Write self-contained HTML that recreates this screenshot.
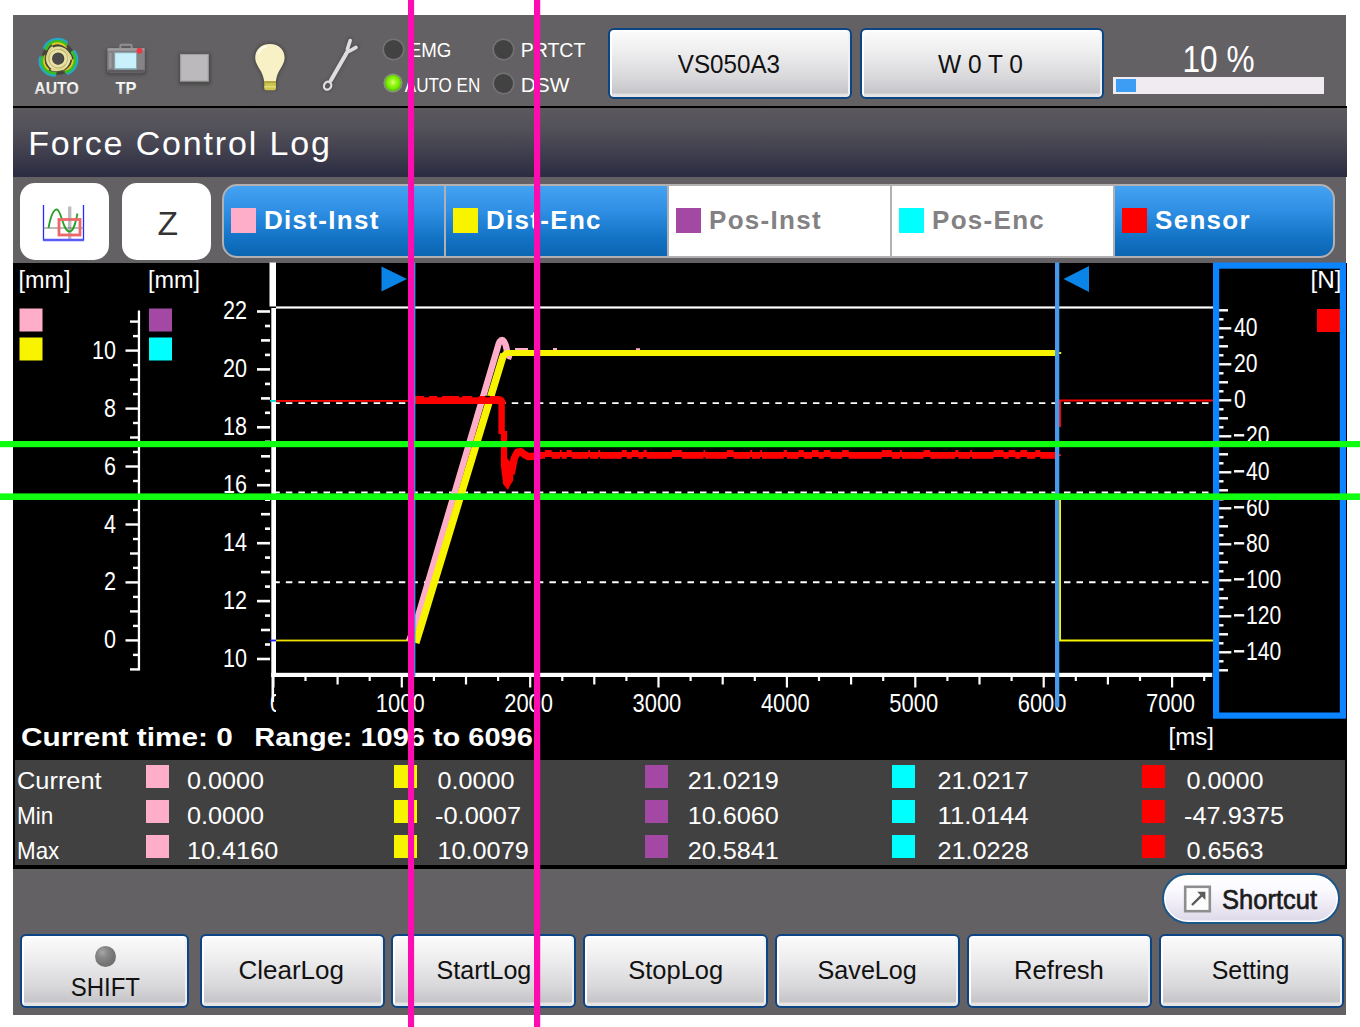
<!DOCTYPE html>
<html lang="en">
<head>
<meta charset="utf-8">
<title>Force Control Log</title>
<style>
html,body{margin:0;padding:0;background:#fff;}
body{width:1360px;height:1027px;position:relative;overflow:hidden;font-family:"Liberation Sans",sans-serif;}
.abs{position:absolute;}
#panel{position:absolute;left:13px;top:15px;width:1333px;height:999.5px;background:#636163;}
#hdrline{position:absolute;left:13px;top:105.5px;width:1333.5px;height:2.5px;background:#000;}
#title{position:absolute;left:13px;top:108px;width:1333.5px;height:68.5px;
 background:linear-gradient(#5b595d 0%,#55535a 25%,#3d3c4c 70%,#2b2b41 100%);}
#title span{position:absolute;left:15.2px;top:14.6px;font-size:34px;letter-spacing:1.85px;color:#fff;white-space:nowrap;line-height:40px;}
#chartbg{position:absolute;left:13px;top:262.5px;width:1333.5px;height:606px;background:#000;}
#table{position:absolute;left:15px;top:760px;width:1330px;height:105px;background:#424142;}
.btn{position:absolute;box-sizing:border-box;border:2px solid #0c4484;border-radius:6px;
 background:linear-gradient(#fbfbfb 0%,#efeff0 30%,#d9d8db 70%,#c6c5c9 94%,#e4e4e4 96%,#e4e4e4 100%);
 box-shadow:inset 2px 2px 0 #fff, inset -2px 0 0 #f0f0f0;
 color:#111;text-align:center;white-space:nowrap;}
.btn span{display:inline-block;}
.wbtn{position:absolute;background:#fff;border-radius:15px;}
.tab{position:absolute;top:184px;height:74px;box-sizing:border-box;border:2px solid #b2b0b2;border-left-width:1px;border-right-width:1px;}
.tab.on{background:linear-gradient(#45a2f2 0%,#2f8fe4 35%,#1272c4 75%,#0c66b2 100%);}
.tab.off{background:#fff;}
.tab i{position:absolute;top:22px;margin-left:-1px;width:25px;height:25px;}
.tab b{position:absolute;top:17px;font-size:26px;line-height:34px;letter-spacing:1.3px;white-space:nowrap;}
.tab.on b{color:#fff;}
.tab.off b{color:#838183;}
.sq{position:absolute;width:23px;height:23px;}
.tv{position:absolute;font-size:24px;line-height:28px;color:#fff;white-space:nowrap;letter-spacing:0.75px;}
svg{position:absolute;left:0;top:0;}
svg text{font-family:"Liberation Sans",sans-serif;}
.led{position:absolute;width:19px;height:19px;border-radius:50%;background:#434243;box-shadow:0 0 0 1.6px #747274;}
.hl{position:absolute;font-size:19px;line-height:22px;color:#fff;white-space:nowrap;}
</style>
</head>
<body>
<div id="panel"></div>

<div id="header">
<div class="led" style="left:383.8px;top:39.7px;"></div>
<div class="led" style="left:385.2px;top:75.3px;width:16px;height:16px;background:radial-gradient(circle at 50% 46%,#e4ff88 0%,#a4fa28 22%,#74ea00 52%,#52c000 80%,#4a9c10 100%);box-shadow:0 0 0 1.6px rgba(150,170,130,.75);"></div>
<div class="led" style="left:494.3px;top:39.7px;"></div>
<div class="led" style="left:494.3px;top:74.1px;"></div>
</div>
<div id="hdrline"></div>
<div id="title"><span>Force Control Log</span></div>
<div class="btn" style="left:607.5px;top:27.5px;width:244.5px;height:71.5px;"></div>
<div class="btn" style="left:860px;top:27.5px;width:244px;height:71.5px;"></div>
<div class="abs" style="left:1113px;top:77px;width:211px;height:17px;background:#f0ebf0;"></div>
<div class="abs" style="left:1115.5px;top:79px;width:20.5px;height:12.5px;background:#3d9cf3;"></div>
<div class="wbtn" style="left:19.5px;top:183px;width:89.5px;height:77px;"></div>
<div class="wbtn" style="left:122px;top:183px;width:88.5px;height:77px;"></div>
<div class="tab on" style="left:222px;width:223px;border-radius:15px 0 0 15px;border-left-width:2px;"><i style="left:8px;background:#ffaec9"></i><b style="left:40px">Dist-Inst</b></div>
<div class="tab on" style="left:445px;width:223px;"><i style="left:8px;background:#f8f400"></i><b style="left:40px">Dist-Enc</b></div>
<div class="tab off" style="left:668px;width:223px;"><i style="left:8px;background:#a349a4"></i><b style="left:40px">Pos-Inst</b></div>
<div class="tab off" style="left:891px;width:223px;"><i style="left:8px;background:#00ffff"></i><b style="left:40px">Pos-Enc</b></div>
<div class="tab on" style="left:1114px;width:221px;border-radius:0 15px 15px 0;border-right-width:2px;"><i style="left:8px;background:#ff0000"></i><b style="left:40px">Sensor</b></div>
<div id="chartbg"></div>
<div id="table"></div>
<div class="sq" style="left:146.3px;top:765px;background:#ffaec9"></div>
<div class="sq" style="left:394px;top:765px;background:#f8f400"></div>
<div class="sq" style="left:644.5px;top:765px;background:#a349a4"></div>
<div class="sq" style="left:892.4px;top:765px;background:#00ffff"></div>
<div class="sq" style="left:1142px;top:765px;background:#ff0000"></div>
<div class="sq" style="left:146.3px;top:800px;background:#ffaec9"></div>
<div class="sq" style="left:394px;top:800px;background:#f8f400"></div>
<div class="sq" style="left:644.5px;top:800px;background:#a349a4"></div>
<div class="sq" style="left:892.4px;top:800px;background:#00ffff"></div>
<div class="sq" style="left:1142px;top:800px;background:#ff0000"></div>
<div class="sq" style="left:146.3px;top:835px;background:#ffaec9"></div>
<div class="sq" style="left:394px;top:835px;background:#f8f400"></div>
<div class="sq" style="left:644.5px;top:835px;background:#a349a4"></div>
<div class="sq" style="left:892.4px;top:835px;background:#00ffff"></div>
<div class="sq" style="left:1142px;top:835px;background:#ff0000"></div>
<div class="btn" style="left:20px;top:934px;width:169px;height:74px;"><i class="abs" style="left:72.5px;top:10px;width:21px;height:21px;border-radius:50%;background:radial-gradient(circle at 35% 30%,#a8a8a8 0%,#8a8a8a 25%,#747474 60%,#6a6a6a 100%);"></i></div>
<div class="btn" style="left:199.5px;top:934px;width:185px;height:74px;"></div>
<div class="btn" style="left:391.3px;top:934px;width:185px;height:74px;"></div>
<div class="btn" style="left:583.1px;top:934px;width:185px;height:74px;"></div>
<div class="btn" style="left:774.9px;top:934px;width:185px;height:74px;"></div>
<div class="btn" style="left:966.7px;top:934px;width:185px;height:74px;"></div>
<div class="btn" style="left:1158.5px;top:934px;width:185px;height:74px;"></div>
<div class="btn" style="left:1162px;top:873px;width:178px;height:51px;border-radius:25.5px;border-color:#1a5688;background:linear-gradient(#ffffff 0%,#fbfaff 30%,#efecf6 60%,#dcd8e8 100%);box-shadow:inset 0 0 0 1.5px #fff;"></div>
<svg width="1360" height="1027" viewBox="0 0 1360 1027">
<defs><filter id="sh" x="-30%" y="-30%" width="160%" height="160%"><feGaussianBlur stdDeviation="1.6"/></filter><filter id="b1" x="-20%" y="-20%" width="140%" height="140%"><feGaussianBlur stdDeviation="0.55"/></filter><linearGradient id="gtxt" x1="0" y1="0" x2="0" y2="1"><stop offset="0" stop-color="#ffffff"/><stop offset="0.55" stop-color="#f0f0f0"/><stop offset="1" stop-color="#b8b8b8"/></linearGradient></defs>
<g id="ico-auto" fill="none" filter="url(#b1)"><circle cx="58.2" cy="58.2" r="16.5" fill="#3f3e36" opacity="0.8"/><path d="M44.22 47.71 A14.6 14.6 0 0 1 66.55 42.14" stroke="#22a8cc" stroke-width="2.6" stroke-linecap="round"/><path d="M46.06 49.00 A12.4 12.4 0 0 1 66.17 44.72" stroke="#38be24" stroke-width="2.8" stroke-linecap="round"/><path d="M52.68 44.46 A10.4 10.4 0 0 1 65.97 47.53" stroke="#e2ce20" stroke-width="2.0" stroke-linecap="round"/><path d="M74.28 51.34 A14.6 14.6 0 0 1 67.93 73.46" stroke="#22a8cc" stroke-width="2.6" stroke-linecap="round"/><path d="M72.24 52.29 A12.4 12.4 0 0 1 65.88 71.84" stroke="#38be24" stroke-width="2.8" stroke-linecap="round"/><path d="M72.86 60.29 A10.4 10.4 0 0 1 63.55 70.27" stroke="#e2ce20" stroke-width="2.0" stroke-linecap="round"/><path d="M54.90 75.36 A14.6 14.6 0 0 1 40.11 57.74" stroke="#22a8cc" stroke-width="2.6" stroke-linecap="round"/><path d="M55.25 73.14 A12.4 12.4 0 0 1 42.59 56.94" stroke="#38be24" stroke-width="2.8" stroke-linecap="round"/><path d="M48.27 69.19 A10.4 10.4 0 0 1 45.20 55.89" stroke="#e2ce20" stroke-width="2.0" stroke-linecap="round"/><circle cx="58.2" cy="58.6" r="13" stroke="#4a4838" stroke-width="1.4" opacity="0.85"/><circle cx="58.2" cy="58.6" r="9.2" stroke="#e9e2a2" stroke-width="6"/><path d="M60.7 49.4 A12 12 0 0 1 70.8 58.6" stroke="#ddd58c" stroke-width="2.6" stroke-linecap="round"/><path d="M64.9 65.3 A12 12 0 0 1 51.9 69.5" stroke="#ddd58c" stroke-width="2.6" stroke-linecap="round"/><path d="M49.0 61.1 A12 12 0 0 1 51.9 47.7" stroke="#ddd58c" stroke-width="2.6" stroke-linecap="round"/><circle cx="58.2" cy="58.6" r="9.4" stroke="#8c8450" stroke-width="0.9" opacity="0.55"/><ellipse cx="57.900000000000006" cy="58.800000000000004" rx="4.9" ry="5.6" fill="#4d4c4a"/></g>
<text x="34.2" y="93.9" font-size="16.5" fill="url(#gtxt)" font-weight="bold" text-anchor="start" textLength="44.6" lengthAdjust="spacingAndGlyphs">AUTO</text>
<g id="ico-tp"><rect x="105.5" y="48.5" width="41" height="27" rx="4" fill="#3c3a3c" opacity="0.55" filter="url(#sh)"/><rect x="120.3" y="44.8" width="11.4" height="7" rx="1" fill="none" stroke="#929092" stroke-width="1.9"/><rect x="107.3" y="48.3" width="37.5" height="24.2" rx="3" fill="#858385"/><rect x="107.3" y="48.3" width="37.5" height="2.2" rx="1" fill="#a09ea0"/><rect x="109.3" y="53" width="2.2" height="15" fill="#9c9a9c"/><rect x="107.3" y="69.8" width="37.5" height="2.7" rx="1.3" fill="#5e5c5e"/><rect x="114.4" y="52.3" width="22.4" height="17.2" fill="#8fb6c2"/><rect x="115.2" y="53.2" width="20.8" height="14.8" fill="#c8f1fb"/><circle cx="139.5" cy="50.8" r="3" fill="#ee3846" filter="url(#b1)"/></g>
<text x="115.4" y="93.9" font-size="16.5" fill="url(#gtxt)" font-weight="bold" text-anchor="start" textLength="21.0" lengthAdjust="spacingAndGlyphs">TP</text>
<rect x="178.5" y="53" width="32.5" height="32" fill="#3e3c3e" opacity="0.6" filter="url(#sh)"/>
<rect x="180" y="53.9" width="28.9" height="27.8" fill="#9f9d9f"/>
<rect x="181.2" y="55" width="26.5" height="25.5" fill="#bbb9bb"/>
<g id="ico-bulb"><path d="M269.9 42.5 C259.5 42.5 253.6 49.5 253.6 57.5 C253.6 66 260.5 70 262.5 79 L262.8 90.5 L277.2 90.5 L277.5 79 C279.5 70 286.2 66 286.2 57.5 C286.2 49.5 280.3 42.5 269.9 42.5 Z" fill="#3c3a38" opacity="0.55" filter="url(#sh)"/><path d="M269.9 44 C260.8 44 255.2 50.2 255.2 57.6 C255.2 65.2 261.6 69.6 263.6 78.2 L264.2 81.5 L275.8 81.5 L276.4 78.2 C278.4 69.6 284.6 65.2 284.6 57.6 C284.6 50.2 279 44 269.9 44 Z" fill="#f9f1c6"/><rect x="264.3" y="81" width="11.6" height="9.2" rx="1.6" fill="#cfc652"/><rect x="264.3" y="81" width="11.6" height="2.2" fill="#b0a83e"/><rect x="264.3" y="86" width="11.6" height="1.6" fill="#e2da72"/><path d="M258.4 53.5 C259.8 49.8 262.6 47.4 266 46.6" fill="none" stroke="#fffef4" stroke-width="1.8" stroke-linecap="round"/></g>
<g id="ico-wrench" fill="none" stroke-linecap="round" stroke-linejoin="round"><g stroke="#3c3a3c" opacity="0.5" filter="url(#sh)"><path d="M331 80.5 L348.8 49.5" stroke-width="5.5"/><circle cx="327.6" cy="85.6" r="3.8" stroke-width="3.5"/><path d="M350 39.5 L347.8 49 M349.5 50.8 L356.8 46.6" stroke-width="5"/></g><g stroke="#dedede"><path d="M330.8 80.6 L348.2 50.2" stroke-width="4"/><ellipse cx="327.6" cy="85.7" rx="3.5" ry="4.1" stroke-width="2.3" transform="rotate(30 327.6 85.7)"/><path d="M350.2 40.5 L347.4 49" stroke-width="3.6"/><path d="M349.6 51 L356 47.4" stroke-width="3.6"/></g></g>
<text x="408.8" y="56.8" font-size="20.5" fill="#fff" font-weight="normal" text-anchor="start" textLength="42.6" lengthAdjust="spacingAndGlyphs">EMG</text>
<text x="404.8" y="91.8" font-size="20.5" fill="#fff" font-weight="normal" text-anchor="start" textLength="75.5" lengthAdjust="spacingAndGlyphs">AUTO EN</text>
<text x="520.7" y="56.8" font-size="20.5" fill="#fff" font-weight="normal" text-anchor="start" textLength="64.7" lengthAdjust="spacingAndGlyphs">PRTCT</text>
<text x="520.7" y="91.8" font-size="20.5" fill="#fff" font-weight="normal" text-anchor="start" textLength="48.7" lengthAdjust="spacingAndGlyphs">DSW</text>
<text x="1182.5" y="71.5" font-size="36" fill="#fff" font-weight="normal" text-anchor="start" textLength="72.0" lengthAdjust="spacingAndGlyphs">10 %</text>
<g id="ico-graph" fill="none"><rect x="68" y="206.5" width="3.4" height="34" fill="#bdbdbd"/><path d="M43.5 205 V240 H83.5 V205" stroke="#2a2af8" stroke-width="1.3"/><path d="M43.5 240 H83.5" stroke="#5a5af8" stroke-width="2.6"/><path d="M43.5 228 H83.5" stroke="#787878" stroke-width="1"/><path d="M48.5 228 C51 214 54 209.5 57 209.5 C61 209.5 63 231.5 69.5 231.5 C74 231.5 75.5 222 77.5 213.5" stroke="#28a028" stroke-width="1.8"/><rect x="59" y="219.5" width="21" height="15.5" stroke="#ec6868" stroke-width="2.8"/></g>
<text x="157.5" y="235.0" font-size="33.5" fill="#333" font-weight="normal" text-anchor="start" textLength="20.5" lengthAdjust="spacingAndGlyphs">Z</text>
<rect x="1185.2" y="886.8" width="24.6" height="24.4" fill="#fcfcfc" stroke="#8e8e8e" stroke-width="2.6"/>
<path d="M1192 905 L1201.5 895.6" fill="none" stroke="#5a5a5a" stroke-width="2.4"/>
<path d="M1197.2 891.8 H1205.4 V900 Z" fill="#5a5a5a"/>
<text x="1222.0" y="909.1" font-size="27.5" fill="#1c1c1c" font-weight="normal" text-anchor="start" textLength="95.0" lengthAdjust="spacingAndGlyphs" stroke="#1c1c1c" stroke-width="0.7">Shortcut</text>
<g id="chart">
<text x="18.5" y="288.0" font-size="23" fill="#fff" font-weight="normal" text-anchor="start" textLength="52.0" lengthAdjust="spacingAndGlyphs">[mm]</text>
<text x="148.0" y="288.0" font-size="23" fill="#fff" font-weight="normal" text-anchor="start" textLength="52.0" lengthAdjust="spacingAndGlyphs">[mm]</text>
<text x="1310.5" y="287.5" font-size="23" fill="#fff" font-weight="normal" text-anchor="start" textLength="31.0" lengthAdjust="spacingAndGlyphs">[N]</text>
<text x="1168.5" y="744.5" font-size="23" fill="#fff" font-weight="normal" text-anchor="start" textLength="45.5" lengthAdjust="spacingAndGlyphs">[ms]</text>
<rect x="19.5" y="308.5" width="23" height="23" fill="#ffaec9"/>
<rect x="19.5" y="337.5" width="23" height="23" fill="#f8f400"/>
<rect x="149" y="308.5" width="23" height="23" fill="#a349a4"/>
<rect x="149" y="337.5" width="23" height="23" fill="#00ffff"/>
<rect x="1317" y="309" width="23" height="23" fill="#ff0000"/>
<rect x="137.8" y="310.5" width="2.3" height="360.1" fill="#fff"/>
<rect x="130.0" y="668.2" width="8.0" height="2.4" fill="#fff"/>
<rect x="133.0" y="653.7" width="5.0" height="2.4" fill="#fff"/>
<rect x="125.5" y="639.2" width="12.5" height="2.4" fill="#fff"/>
<rect x="133.0" y="624.7" width="5.0" height="2.4" fill="#fff"/>
<rect x="130.0" y="610.2" width="8.0" height="2.4" fill="#fff"/>
<rect x="133.0" y="595.7" width="5.0" height="2.4" fill="#fff"/>
<rect x="125.5" y="581.2" width="12.5" height="2.4" fill="#fff"/>
<rect x="133.0" y="566.7" width="5.0" height="2.4" fill="#fff"/>
<rect x="130.0" y="552.3" width="8.0" height="2.4" fill="#fff"/>
<rect x="133.0" y="537.8" width="5.0" height="2.4" fill="#fff"/>
<rect x="125.5" y="523.3" width="12.5" height="2.4" fill="#fff"/>
<rect x="133.0" y="508.8" width="5.0" height="2.4" fill="#fff"/>
<rect x="130.0" y="494.3" width="8.0" height="2.4" fill="#fff"/>
<rect x="133.0" y="479.8" width="5.0" height="2.4" fill="#fff"/>
<rect x="125.5" y="465.3" width="12.5" height="2.4" fill="#fff"/>
<rect x="133.0" y="450.8" width="5.0" height="2.4" fill="#fff"/>
<rect x="130.0" y="436.3" width="8.0" height="2.4" fill="#fff"/>
<rect x="133.0" y="421.8" width="5.0" height="2.4" fill="#fff"/>
<rect x="125.5" y="407.4" width="12.5" height="2.4" fill="#fff"/>
<rect x="133.0" y="392.9" width="5.0" height="2.4" fill="#fff"/>
<rect x="130.0" y="378.4" width="8.0" height="2.4" fill="#fff"/>
<rect x="133.0" y="363.9" width="5.0" height="2.4" fill="#fff"/>
<rect x="125.5" y="349.4" width="12.5" height="2.4" fill="#fff"/>
<rect x="133.0" y="334.9" width="5.0" height="2.4" fill="#fff"/>
<rect x="130.0" y="320.4" width="8.0" height="2.4" fill="#fff"/>
<text x="104.0" y="648.4" font-size="25.5" fill="#fff" font-weight="normal" text-anchor="start" textLength="12.0" lengthAdjust="spacingAndGlyphs">0</text>
<text x="104.0" y="590.4" font-size="25.5" fill="#fff" font-weight="normal" text-anchor="start" textLength="12.0" lengthAdjust="spacingAndGlyphs">2</text>
<text x="104.0" y="532.5" font-size="25.5" fill="#fff" font-weight="normal" text-anchor="start" textLength="12.0" lengthAdjust="spacingAndGlyphs">4</text>
<text x="104.0" y="474.5" font-size="25.5" fill="#fff" font-weight="normal" text-anchor="start" textLength="12.0" lengthAdjust="spacingAndGlyphs">6</text>
<text x="104.0" y="416.6" font-size="25.5" fill="#fff" font-weight="normal" text-anchor="start" textLength="12.0" lengthAdjust="spacingAndGlyphs">8</text>
<text x="92.0" y="358.6" font-size="25.5" fill="#fff" font-weight="normal" text-anchor="start" textLength="24.0" lengthAdjust="spacingAndGlyphs">10</text>
<rect x="269.5" y="262.5" width="6.5" height="44" fill="#fff"/>
<rect x="271.3" y="308" width="4.7" height="369" fill="#fff"/>
<rect x="257.0" y="657.7" width="13.0" height="2.6" fill="#fff"/>
<rect x="265.0" y="643.2" width="5.0" height="2.6" fill="#fff"/>
<rect x="261.0" y="628.7" width="9.0" height="2.6" fill="#fff"/>
<rect x="265.0" y="614.3" width="5.0" height="2.6" fill="#fff"/>
<rect x="257.0" y="599.8" width="13.0" height="2.6" fill="#fff"/>
<rect x="265.0" y="585.3" width="5.0" height="2.6" fill="#fff"/>
<rect x="261.0" y="570.8" width="9.0" height="2.6" fill="#fff"/>
<rect x="265.0" y="556.3" width="5.0" height="2.6" fill="#fff"/>
<rect x="257.0" y="541.9" width="13.0" height="2.6" fill="#fff"/>
<rect x="265.0" y="527.4" width="5.0" height="2.6" fill="#fff"/>
<rect x="261.0" y="512.9" width="9.0" height="2.6" fill="#fff"/>
<rect x="265.0" y="498.4" width="5.0" height="2.6" fill="#fff"/>
<rect x="257.0" y="483.9" width="13.0" height="2.6" fill="#fff"/>
<rect x="265.0" y="469.5" width="5.0" height="2.6" fill="#fff"/>
<rect x="261.0" y="455.0" width="9.0" height="2.6" fill="#fff"/>
<rect x="265.0" y="440.5" width="5.0" height="2.6" fill="#fff"/>
<rect x="257.0" y="426.0" width="13.0" height="2.6" fill="#fff"/>
<rect x="265.0" y="411.5" width="5.0" height="2.6" fill="#fff"/>
<rect x="261.0" y="397.1" width="9.0" height="2.6" fill="#fff"/>
<rect x="265.0" y="382.6" width="5.0" height="2.6" fill="#fff"/>
<rect x="257.0" y="368.1" width="13.0" height="2.6" fill="#fff"/>
<rect x="265.0" y="353.6" width="5.0" height="2.6" fill="#fff"/>
<rect x="261.0" y="339.1" width="9.0" height="2.6" fill="#fff"/>
<rect x="265.0" y="324.7" width="5.0" height="2.6" fill="#fff"/>
<rect x="257.0" y="310.2" width="13.0" height="2.6" fill="#fff"/>
<text x="223.0" y="666.5" font-size="25.5" fill="#fff" font-weight="normal" text-anchor="start" textLength="24.0" lengthAdjust="spacingAndGlyphs">10</text>
<text x="223.0" y="608.6" font-size="25.5" fill="#fff" font-weight="normal" text-anchor="start" textLength="24.0" lengthAdjust="spacingAndGlyphs">12</text>
<text x="223.0" y="550.7" font-size="25.5" fill="#fff" font-weight="normal" text-anchor="start" textLength="24.0" lengthAdjust="spacingAndGlyphs">14</text>
<text x="223.0" y="492.7" font-size="25.5" fill="#fff" font-weight="normal" text-anchor="start" textLength="24.0" lengthAdjust="spacingAndGlyphs">16</text>
<text x="223.0" y="434.8" font-size="25.5" fill="#fff" font-weight="normal" text-anchor="start" textLength="24.0" lengthAdjust="spacingAndGlyphs">18</text>
<text x="223.0" y="376.9" font-size="25.5" fill="#fff" font-weight="normal" text-anchor="start" textLength="24.0" lengthAdjust="spacingAndGlyphs">20</text>
<text x="223.0" y="319.0" font-size="25.5" fill="#fff" font-weight="normal" text-anchor="start" textLength="24.0" lengthAdjust="spacingAndGlyphs">22</text>
<rect x="276" y="306.4" width="939" height="2.2" fill="#fff"/>
<line x1="273.3" y1="403.15" x2="1213" y2="403.15" stroke="#fff" stroke-width="1.9" stroke-dasharray="6.5 6.05"/>
<line x1="273.3" y1="492.5" x2="1213" y2="492.5" stroke="#fff" stroke-width="1.9" stroke-dasharray="6.5 6.05"/>
<line x1="273.3" y1="582.3" x2="1213" y2="582.3" stroke="#fff" stroke-width="1.9" stroke-dasharray="6.5 6.05"/>
<rect x="271.3" y="672.8" width="941" height="4.2" fill="#fff"/>
<rect x="272.3" y="676.5" width="2.2" height="11" fill="#fff"/>
<rect x="304.4" y="676.5" width="2.2" height="4.5" fill="#fff"/>
<rect x="336.5" y="676.5" width="2.2" height="8" fill="#fff"/>
<rect x="368.6" y="676.5" width="2.2" height="4.5" fill="#fff"/>
<rect x="400.7" y="676.5" width="2.2" height="11" fill="#fff"/>
<rect x="432.8" y="676.5" width="2.2" height="4.5" fill="#fff"/>
<rect x="464.9" y="676.5" width="2.2" height="8" fill="#fff"/>
<rect x="497.0" y="676.5" width="2.2" height="4.5" fill="#fff"/>
<rect x="529.1" y="676.5" width="2.2" height="11" fill="#fff"/>
<rect x="561.2" y="676.5" width="2.2" height="4.5" fill="#fff"/>
<rect x="593.2" y="676.5" width="2.2" height="8" fill="#fff"/>
<rect x="625.3" y="676.5" width="2.2" height="4.5" fill="#fff"/>
<rect x="657.4" y="676.5" width="2.2" height="11" fill="#fff"/>
<rect x="689.5" y="676.5" width="2.2" height="4.5" fill="#fff"/>
<rect x="721.6" y="676.5" width="2.2" height="8" fill="#fff"/>
<rect x="753.7" y="676.5" width="2.2" height="4.5" fill="#fff"/>
<rect x="785.8" y="676.5" width="2.2" height="11" fill="#fff"/>
<rect x="817.9" y="676.5" width="2.2" height="4.5" fill="#fff"/>
<rect x="850.0" y="676.5" width="2.2" height="8" fill="#fff"/>
<rect x="882.1" y="676.5" width="2.2" height="4.5" fill="#fff"/>
<rect x="914.2" y="676.5" width="2.2" height="11" fill="#fff"/>
<rect x="946.3" y="676.5" width="2.2" height="4.5" fill="#fff"/>
<rect x="978.4" y="676.5" width="2.2" height="8" fill="#fff"/>
<rect x="1010.5" y="676.5" width="2.2" height="4.5" fill="#fff"/>
<rect x="1042.6" y="676.5" width="2.2" height="11" fill="#fff"/>
<rect x="1074.7" y="676.5" width="2.2" height="4.5" fill="#fff"/>
<rect x="1106.8" y="676.5" width="2.2" height="8" fill="#fff"/>
<rect x="1138.9" y="676.5" width="2.2" height="4.5" fill="#fff"/>
<rect x="1171.0" y="676.5" width="2.2" height="11" fill="#fff"/>
<rect x="1203.1" y="676.5" width="2.2" height="4.5" fill="#fff"/>
<text x="375.8" y="711.5" font-size="25.5" fill="#fff" font-weight="normal" text-anchor="start" textLength="48.8" lengthAdjust="spacingAndGlyphs">1000</text>
<text x="504.2" y="711.5" font-size="25.5" fill="#fff" font-weight="normal" text-anchor="start" textLength="48.8" lengthAdjust="spacingAndGlyphs">2000</text>
<text x="632.5" y="711.5" font-size="25.5" fill="#fff" font-weight="normal" text-anchor="start" textLength="48.8" lengthAdjust="spacingAndGlyphs">3000</text>
<text x="760.9" y="711.5" font-size="25.5" fill="#fff" font-weight="normal" text-anchor="start" textLength="48.8" lengthAdjust="spacingAndGlyphs">4000</text>
<text x="889.3" y="711.5" font-size="25.5" fill="#fff" font-weight="normal" text-anchor="start" textLength="48.8" lengthAdjust="spacingAndGlyphs">5000</text>
<text x="1017.7" y="711.5" font-size="25.5" fill="#fff" font-weight="normal" text-anchor="start" textLength="48.8" lengthAdjust="spacingAndGlyphs">6000</text>
<text x="1146.1" y="711.5" font-size="25.5" fill="#fff" font-weight="normal" text-anchor="start" textLength="48.8" lengthAdjust="spacingAndGlyphs">7000</text>
<clipPath id="c0"><rect x="262" y="676" width="14" height="40"/></clipPath>
<g clip-path="url(#c0)"><text x="270.0" y="711.5" font-size="25.5" fill="#fff" font-weight="normal" text-anchor="start" textLength="12.2" lengthAdjust="spacingAndGlyphs">0</text><rect x="271.5" y="676" width="2.6" height="26" fill="#fff"/></g>
<rect x="1218" y="669.1" width="10" height="2.4" fill="#fff"/>
<rect x="1218" y="660.1" width="5.5" height="2.4" fill="#fff"/>
<rect x="1218" y="651.1" width="13.3" height="2.4" fill="#fff"/>
<rect x="1218" y="642.1" width="5.5" height="2.4" fill="#fff"/>
<rect x="1218" y="633.1" width="10" height="2.4" fill="#fff"/>
<rect x="1218" y="624.1" width="5.5" height="2.4" fill="#fff"/>
<rect x="1218" y="615.1" width="13.3" height="2.4" fill="#fff"/>
<rect x="1218" y="606.1" width="5.5" height="2.4" fill="#fff"/>
<rect x="1218" y="597.1" width="10" height="2.4" fill="#fff"/>
<rect x="1218" y="588.1" width="5.5" height="2.4" fill="#fff"/>
<rect x="1218" y="579.1" width="13.3" height="2.4" fill="#fff"/>
<rect x="1218" y="570.1" width="5.5" height="2.4" fill="#fff"/>
<rect x="1218" y="561.1" width="10" height="2.4" fill="#fff"/>
<rect x="1218" y="552.1" width="5.5" height="2.4" fill="#fff"/>
<rect x="1218" y="543.1" width="13.3" height="2.4" fill="#fff"/>
<rect x="1218" y="534.1" width="5.5" height="2.4" fill="#fff"/>
<rect x="1218" y="525.1" width="10" height="2.4" fill="#fff"/>
<rect x="1218" y="516.1" width="5.5" height="2.4" fill="#fff"/>
<rect x="1218" y="507.1" width="13.3" height="2.4" fill="#fff"/>
<rect x="1218" y="498.1" width="5.5" height="2.4" fill="#fff"/>
<rect x="1218" y="489.1" width="10" height="2.4" fill="#fff"/>
<rect x="1218" y="480.1" width="5.5" height="2.4" fill="#fff"/>
<rect x="1218" y="471.1" width="13.3" height="2.4" fill="#fff"/>
<rect x="1218" y="462.1" width="5.5" height="2.4" fill="#fff"/>
<rect x="1218" y="453.1" width="10" height="2.4" fill="#fff"/>
<rect x="1218" y="444.1" width="5.5" height="2.4" fill="#fff"/>
<rect x="1218" y="435.1" width="13.3" height="2.4" fill="#fff"/>
<rect x="1218" y="426.1" width="5.5" height="2.4" fill="#fff"/>
<rect x="1218" y="417.1" width="10" height="2.4" fill="#fff"/>
<rect x="1218" y="408.1" width="5.5" height="2.4" fill="#fff"/>
<rect x="1218" y="399.1" width="13.3" height="2.4" fill="#fff"/>
<rect x="1218" y="390.1" width="5.5" height="2.4" fill="#fff"/>
<rect x="1218" y="381.1" width="10" height="2.4" fill="#fff"/>
<rect x="1218" y="372.1" width="5.5" height="2.4" fill="#fff"/>
<rect x="1218" y="363.1" width="13.3" height="2.4" fill="#fff"/>
<rect x="1218" y="354.1" width="5.5" height="2.4" fill="#fff"/>
<rect x="1218" y="345.1" width="10" height="2.4" fill="#fff"/>
<rect x="1218" y="336.1" width="5.5" height="2.4" fill="#fff"/>
<rect x="1218" y="327.1" width="13.3" height="2.4" fill="#fff"/>
<rect x="1218" y="318.1" width="5.5" height="2.4" fill="#fff"/>
<rect x="1218" y="309.1" width="10" height="2.4" fill="#fff"/>
<text x="1234.0" y="335.7" font-size="25" fill="#fff" font-weight="normal" text-anchor="start" textLength="23.5" lengthAdjust="spacingAndGlyphs">40</text>
<text x="1234.0" y="371.7" font-size="25" fill="#fff" font-weight="normal" text-anchor="start" textLength="23.5" lengthAdjust="spacingAndGlyphs">20</text>
<text x="1234.0" y="407.7" font-size="25" fill="#fff" font-weight="normal" text-anchor="start" textLength="11.8" lengthAdjust="spacingAndGlyphs">0</text>
<rect x="1234" y="434.1" width="10.2" height="2.4" fill="#fff"/>
<text x="1246.0" y="443.7" font-size="25" fill="#fff" font-weight="normal" text-anchor="start" textLength="23.5" lengthAdjust="spacingAndGlyphs">20</text>
<rect x="1234" y="470.1" width="10.2" height="2.4" fill="#fff"/>
<text x="1246.0" y="479.7" font-size="25" fill="#fff" font-weight="normal" text-anchor="start" textLength="23.5" lengthAdjust="spacingAndGlyphs">40</text>
<rect x="1234" y="506.1" width="10.2" height="2.4" fill="#fff"/>
<text x="1246.0" y="515.7" font-size="25" fill="#fff" font-weight="normal" text-anchor="start" textLength="23.5" lengthAdjust="spacingAndGlyphs">60</text>
<rect x="1234" y="542.1" width="10.2" height="2.4" fill="#fff"/>
<text x="1246.0" y="551.7" font-size="25" fill="#fff" font-weight="normal" text-anchor="start" textLength="23.5" lengthAdjust="spacingAndGlyphs">80</text>
<rect x="1234" y="578.1" width="10.2" height="2.4" fill="#fff"/>
<text x="1246.0" y="587.7" font-size="25" fill="#fff" font-weight="normal" text-anchor="start" textLength="35.2" lengthAdjust="spacingAndGlyphs">100</text>
<rect x="1234" y="614.1" width="10.2" height="2.4" fill="#fff"/>
<text x="1246.0" y="623.7" font-size="25" fill="#fff" font-weight="normal" text-anchor="start" textLength="35.2" lengthAdjust="spacingAndGlyphs">120</text>
<rect x="1234" y="650.1" width="10.2" height="2.4" fill="#fff"/>
<text x="1246.0" y="659.7" font-size="25" fill="#fff" font-weight="normal" text-anchor="start" textLength="35.2" lengthAdjust="spacingAndGlyphs">140</text>
<rect x="276" y="400" width="135" height="1.8" fill="#ff0000"/>
<rect x="270" y="400" width="6" height="1.8" fill="#00e0e0"/>
<rect x="276" y="639.6" width="135" height="1.8" fill="#f0e000"/>
<rect x="270" y="639.6" width="6" height="1.8" fill="#2020ff"/>
<path d="M1060 498 V640.6 H1213" fill="none" stroke="#f8f400" stroke-width="2"/>
<rect x="1057" y="352" width="4.2" height="2" fill="#f8f400"/>
<rect x="1057" y="454.2" width="4" height="1.8" fill="#ff0000"/>
<path d="M1060 427 V400.6 H1213" fill="none" stroke="#ff0000" stroke-width="2"/>
<path d="M409 641 L417.5 618 L497.2 349 C498.5 343 500 340 502 340 C504.5 340 506 345 507 351 L509 356 L512 357" fill="none" stroke="#ffaec9" stroke-width="6.4" stroke-linejoin="round"/>
<path d="M515 349 H528 M553 349 H557 M636 349.2 H640" fill="none" stroke="#ffaec9" stroke-width="2"/>
<path d="M415.8 643 L420.8 627 L502.6 357.5 L504 354" fill="none" stroke="#f8f400" stroke-width="7.4" stroke-linejoin="round"/>
<path d="M503.5 357 C504.5 353.2 505.5 353 508 353 L1057 353" fill="none" stroke="#f8f400" stroke-width="6" stroke-linejoin="round"/>
<path d="M415 400 H498 C501 400 501.6 401.5 501.6 404" fill="none" stroke="#ff0000" stroke-width="8" stroke-linejoin="round"/>
<rect x="424.0" y="395.8" width="5.0" height="1.5" fill="#000"/><rect x="437.0" y="395.8" width="5.0" height="1.5" fill="#000"/><rect x="459.0" y="395.8" width="3.3" height="1.5" fill="#000"/><rect x="472.0" y="395.8" width="6.7" height="1.5" fill="#000"/><rect x="485.0" y="395.8" width="5.0" height="1.5" fill="#000"/>
<path d="M501.6 402 V434" fill="none" stroke="#ff0000" stroke-width="6.4"/>
<path d="M504 431 V466" fill="none" stroke="#ff0000" stroke-width="6.2"/>
<path d="M500.9 458 L500.9 466 L503.2 484.3 L507.8 489.9 L510.8 484.3 L513.2 480.5 L513.6 466 L507 458 Z" fill="#ff0000"/>
<path d="M511.2 474 L514.2 458.4 L517.4 452.2 L521 451.8 L524.6 454.6 L528.6 456.6 L534 456.2 L542 455.2" fill="none" stroke="#ff0000" stroke-width="7.4" stroke-linejoin="round"/>
<path d="M540 455.3 H545.0 M545.0 453.5 H551.7 M551.7 455.3 H560.0 M560.0 453.5 H561.7 M561.7 455.3 H566.7 M566.7 453.5 H571.7 M571.7 455.3 H588.4 M588.4 453.5 H590.1 M590.1 455.3 H598.4 M598.4 453.5 H600.1 M600.1 455.3 H621.8 M621.8 453.5 H626.8 M626.8 455.3 H631.8 M631.8 453.5 H638.5 M638.5 455.3 H643.5 M643.5 453.5 H646.8 M646.8 455.3 H671.8 M671.8 453.5 H681.8 M681.8 455.3 H703.5 M703.5 453.5 H705.2 M705.2 455.3 H726.9 M726.9 453.5 H733.6 M733.6 455.3 H750.3 M750.3 453.5 H752.0 M752.0 455.3 H760.3 M760.3 453.5 H762.0 M762.0 455.3 H783.7 M783.7 453.5 H787.0 M787.0 455.3 H798.7 M798.7 453.5 H803.7 M803.7 455.3 H812.0 M812.0 453.5 H818.7 M818.7 455.3 H823.7 M823.7 453.5 H830.4 M830.4 455.3 H842.1 M842.1 453.5 H848.8 M848.8 455.3 H881.8 M881.8 453.5 H891.8 M891.8 455.3 H900.1 M900.1 453.5 H901.8 M901.8 455.3 H923.5 M923.5 453.5 H930.2 M930.2 455.3 H955.2 M955.2 453.5 H958.5 M958.5 455.3 H970.2 M970.2 453.5 H971.9 M971.9 455.3 H993.6 M993.6 453.5 H1003.6 M1003.6 455.3 H1008.6 M1008.6 453.5 H1015.3 M1015.3 455.3 H1020.3 M1020.3 453.5 H1027.0 M1027.0 455.3 H1035.3 M1035.3 453.5 H1040.3 M1040.3 455.3 H1055.0" fill="none" stroke="#ff0000" stroke-width="6.8" stroke-linejoin="miter"/>
<rect x="414" y="262.5" width="1.4" height="414" fill="#3c96e6"/>
<rect x="1055" y="262.5" width="4.3" height="445" fill="#459bea"/>
<path d="M381.5 266.5 L407 279 L381.5 291.5 Z" fill="#0a84e6"/>
<path d="M1089 266 L1063.5 279 L1089 292 Z" fill="#0a84e6"/>
<rect x="1216.1" y="265.6" width="126.8" height="450" fill="none" stroke="#0a84ff" stroke-width="6.2"/>
</g>
<text x="677.8" y="72.8" font-size="25.5" fill="#111" font-weight="normal" text-anchor="start" textLength="102.2" lengthAdjust="spacingAndGlyphs">VS050A3</text>
<text x="938.0" y="72.8" font-size="25.5" fill="#111" font-weight="normal" text-anchor="start" textLength="85.0" lengthAdjust="spacingAndGlyphs">W 0 T 0</text>
<text x="70.7" y="995.6" font-size="25.5" fill="#111" font-weight="normal" text-anchor="start" textLength="69.3" lengthAdjust="spacingAndGlyphs">SHIFT</text>
<text x="238.4" y="979.0" font-size="25.5" fill="#111" font-weight="normal" text-anchor="start" textLength="105.6" lengthAdjust="spacingAndGlyphs">ClearLog</text>
<text x="436.5" y="979.0" font-size="25.5" fill="#111" font-weight="normal" text-anchor="start" textLength="94.8" lengthAdjust="spacingAndGlyphs">StartLog</text>
<text x="628.3" y="979.0" font-size="25.5" fill="#111" font-weight="normal" text-anchor="start" textLength="94.9" lengthAdjust="spacingAndGlyphs">StopLog</text>
<text x="817.6" y="979.0" font-size="25.5" fill="#111" font-weight="normal" text-anchor="start" textLength="99.2" lengthAdjust="spacingAndGlyphs">SaveLog</text>
<text x="1014.0" y="979.0" font-size="25.5" fill="#111" font-weight="normal" text-anchor="start" textLength="89.9" lengthAdjust="spacingAndGlyphs">Refresh</text>
<text x="1211.7" y="979.0" font-size="25.5" fill="#111" font-weight="normal" text-anchor="start" textLength="77.6" lengthAdjust="spacingAndGlyphs">Setting</text>
<text x="17.0" y="788.8" font-size="24" fill="#fff" font-weight="normal" text-anchor="start" textLength="84.6" lengthAdjust="spacingAndGlyphs">Current</text>
<text x="187.0" y="789.3" font-size="24" fill="#fff" font-weight="normal" text-anchor="start" textLength="77.1" lengthAdjust="spacingAndGlyphs">0.0000</text>
<text x="437.5" y="789.3" font-size="24" fill="#fff" font-weight="normal" text-anchor="start" textLength="77.1" lengthAdjust="spacingAndGlyphs">0.0000</text>
<text x="687.7" y="789.3" font-size="24" fill="#fff" font-weight="normal" text-anchor="start" textLength="91.2" lengthAdjust="spacingAndGlyphs">21.0219</text>
<text x="937.5" y="789.3" font-size="24" fill="#fff" font-weight="normal" text-anchor="start" textLength="91.2" lengthAdjust="spacingAndGlyphs">21.0217</text>
<text x="1186.5" y="789.3" font-size="24" fill="#fff" font-weight="normal" text-anchor="start" textLength="77.1" lengthAdjust="spacingAndGlyphs">0.0000</text>
<text x="17.0" y="823.8" font-size="24" fill="#fff" font-weight="normal" text-anchor="start" textLength="36.2" lengthAdjust="spacingAndGlyphs">Min</text>
<text x="187.0" y="824.3" font-size="24" fill="#fff" font-weight="normal" text-anchor="start" textLength="77.1" lengthAdjust="spacingAndGlyphs">0.0000</text>
<text x="435.1" y="824.3" font-size="24" fill="#fff" font-weight="normal" text-anchor="start" textLength="85.9" lengthAdjust="spacingAndGlyphs">-0.0007</text>
<text x="687.7" y="824.3" font-size="24" fill="#fff" font-weight="normal" text-anchor="start" textLength="91.2" lengthAdjust="spacingAndGlyphs">10.6060</text>
<text x="937.5" y="824.3" font-size="24" fill="#fff" font-weight="normal" text-anchor="start" textLength="91.2" lengthAdjust="spacingAndGlyphs">11.0144</text>
<text x="1184.1" y="824.3" font-size="24" fill="#fff" font-weight="normal" text-anchor="start" textLength="100.0" lengthAdjust="spacingAndGlyphs">-47.9375</text>
<text x="17.0" y="858.8" font-size="24" fill="#fff" font-weight="normal" text-anchor="start" textLength="42.3" lengthAdjust="spacingAndGlyphs">Max</text>
<text x="187.0" y="859.3" font-size="24" fill="#fff" font-weight="normal" text-anchor="start" textLength="91.2" lengthAdjust="spacingAndGlyphs">10.4160</text>
<text x="437.5" y="859.3" font-size="24" fill="#fff" font-weight="normal" text-anchor="start" textLength="91.2" lengthAdjust="spacingAndGlyphs">10.0079</text>
<text x="687.7" y="859.3" font-size="24" fill="#fff" font-weight="normal" text-anchor="start" textLength="91.2" lengthAdjust="spacingAndGlyphs">20.5841</text>
<text x="937.5" y="859.3" font-size="24" fill="#fff" font-weight="normal" text-anchor="start" textLength="91.2" lengthAdjust="spacingAndGlyphs">21.0228</text>
<text x="1186.5" y="859.3" font-size="24" fill="#fff" font-weight="normal" text-anchor="start" textLength="77.1" lengthAdjust="spacingAndGlyphs">0.6563</text>
<text x="21.0" y="745.5" font-size="25" fill="#fff" font-weight="bold" text-anchor="start" textLength="211.7" lengthAdjust="spacingAndGlyphs">Current time: 0</text>
<text x="254.3" y="745.5" font-size="25" fill="#fff" font-weight="bold" text-anchor="start" textLength="278.5" lengthAdjust="spacingAndGlyphs">Range: 1096 to 6096</text>
<rect x="0" y="441" width="1360" height="6.2" fill="#10ff10"/>
<rect x="0" y="493.4" width="1360" height="6.6" fill="#10ff10"/>
<rect x="408" y="0" width="6.1" height="1027" fill="#ff0cb0"/>
<rect x="534" y="0" width="6.2" height="1027" fill="#ff0cb0"/>
</svg>
</body></html>
